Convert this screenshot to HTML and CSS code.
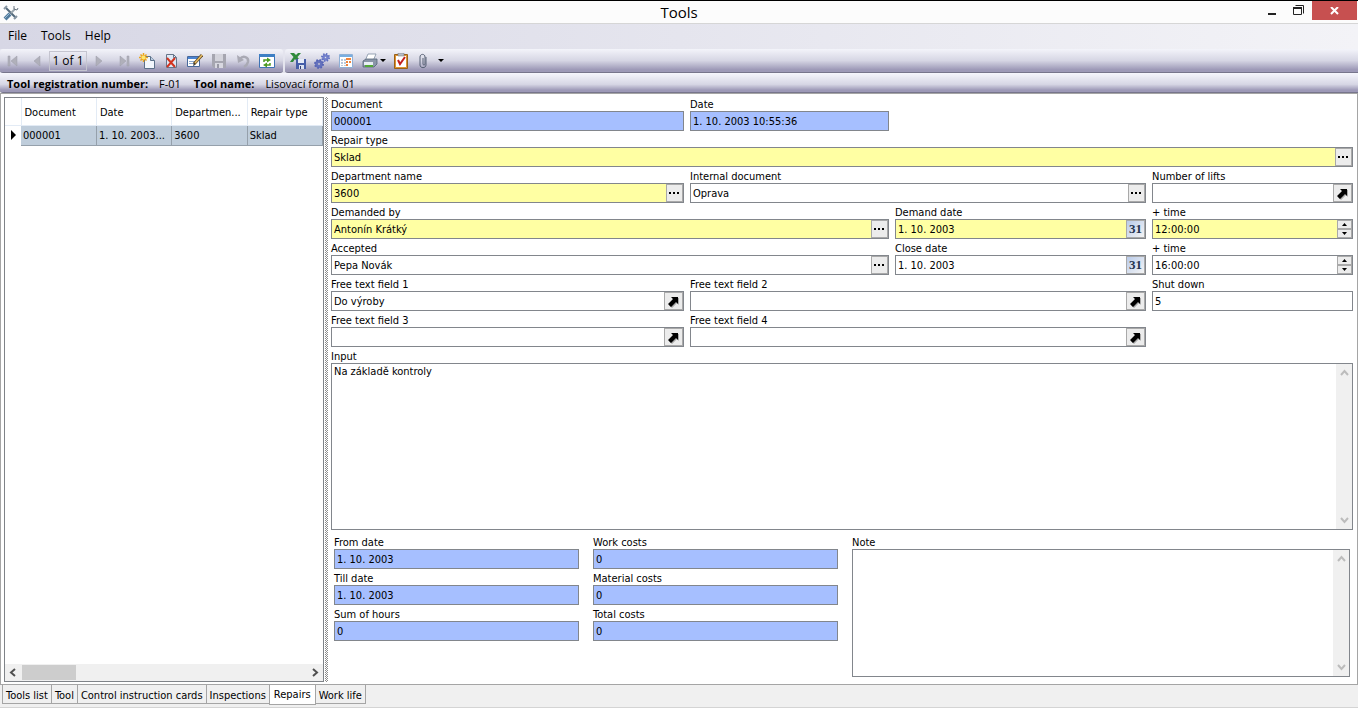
FILE: index.html
```html
<!DOCTYPE html>
<html lang="en">
<head>
  <meta charset="UTF-8">
  <meta name="viewport" content="width=device-width, initial-scale=1.0">
  <title>Tools</title>
  <link rel="stylesheet" href="styles.css">
</head>
<body>
  <svg class="defs" width="0" height="0" aria-hidden="true">
    <symbol id="dots" viewBox="0 0 11 11"><path d="M0 4h2v2H0zM4 4h2v2H4zM8 4h2v2H8z"/></symbol>
    <symbol id="goto" viewBox="0 0 13 13"><path d="M5 3h7v7l-2-2-5 5-3-3 5-5z" fill="#aaa"/><path d="M4 2h7v7L9 7l-5 5-3-3 5-5z"/></symbol>
    <symbol id="up" viewBox="0 0 9 9"><path d="M1 7 4.500 3 8 7" fill="none" stroke="currentColor" stroke-width="2"/></symbol>
    <symbol id="down" viewBox="0 0 9 9"><path d="M1 2 4.500 6 8 2" fill="none" stroke="currentColor" stroke-width="2"/></symbol>
  </svg>

  <header class="titlebar">
    <svg class="app-icon" width="16" height="16" viewBox="0 0 16 16">
      <path d="M3 3l10 10" stroke="#52687a" stroke-width="2"/>
      <path d="M1 4l3-3M11 14l3-3" stroke="#8796a3" stroke-width="2"/>
      <path d="M12 4L8 8" stroke="#9aa5ae" stroke-width="2"/>
      <path d="M7 9l-5 5" stroke="#527c9e" stroke-width="4"/>
      <path d="M6 9l-4 4" stroke="#9dbdd4"/>
      <path d="M11 1v3l3 1 1-2" fill="none" stroke="#66737e"/>
    </svg>
    <h1>Tools</h1>
    <div class="window-buttons">
      <button aria-label="Minimize"><svg width="12" height="12"><path d="M2 8h8v2H2z" fill="#222"/></svg></button>
      <button aria-label="Restore"><svg width="12" height="12"><path d="M2.500 .5h8v8" fill="none" stroke="#222"/><path d="M.5 2.500h8v7h-8z" fill="#fcfcfc" stroke="#222"/><path d="M0 2h9v2H0z" fill="#222"/></svg></button>
      <button class="close" aria-label="Close"><svg width="10" height="8"><path d="M1 0l7 7M8 0L1 7" stroke="#fff" stroke-width="2"/></svg></button>
    </div>
  </header>

  <nav class="menubar">
    <a href="#file">File</a>
    <a href="#tools">Tools</a>
    <a href="#help">Help</a>
  </nav>

  <div class="toolbar">
    <div class="tool-group">
      <button aria-label="First"><svg width="16" height="16"><path d="M3 3h2v10H3zM12 3v10L6 8z" fill="#b0b0ba" stroke="#9c9ca8" stroke-width=".5"/></svg></button>
      <button aria-label="Previous"><svg width="16" height="16"><path d="M11 3v10L5 8z" fill="#b0b0ba" stroke="#9c9ca8" stroke-width=".5"/></svg></button>
      <input class="position" type="text" value="1 of 1" aria-label="Position">
      <button aria-label="Next"><svg width="16" height="16"><path d="M5 3v10l6-5z" fill="#b0b0ba" stroke="#9c9ca8" stroke-width=".5"/></svg></button>
      <button aria-label="Last"><svg width="16" height="16"><path d="M12 3h2v10h-2zM5 3v10l6-5z" fill="#b0b0ba" stroke="#9c9ca8" stroke-width=".5"/></svg></button>
      <button aria-label="New"><svg width="16" height="16"><path d="M5.500 3.500h6l4 4v8h-10z" fill="#f2f6fc" stroke="#5b7089"/><path d="M11.500 3.500v4h4" fill="#bccce0" stroke="#5b7089"/><path d="M4.500 0v9M0 4.500h9M1.500 1.500l6 6M7.500 1.500l-6 6" stroke="#eba41c" stroke-width="1.500"/><circle cx="4.500" cy="4.500" r="2" fill="#ffe66d"/></svg></button>
      <button aria-label="Delete"><svg width="16" height="16"><path d="M3.500 1.500h7l3 3v10h-10z" fill="#dfe8f5" stroke="#66758a"/><path d="M10.500 1.500v3h3" fill="none" stroke="#66758a"/><path d="M4 5l8 9M12 5l-8 9" stroke="#d3331f" stroke-width="2"/></svg></button>
      <button aria-label="Edit"><svg width="16" height="16"><path d="M.5 3.500h12v10H.5z" fill="#fff" stroke="#47689b"/><path d="M1 4h11v2H1z" fill="#4a83d2"/><path d="M2 8.500h6M2 10.500h5" stroke="#8aa8cf"/><path d="M15 2l-8 9" stroke="#614b27" stroke-width="3"/><path d="M15 2l-7 8" stroke="#e9bd62" stroke-width="1.500"/><path d="M7 10l-1 3 2-1z" fill="#222"/></svg></button>
      <button aria-label="Save"><svg width="16" height="16"><path d="M1 1h14v14H3l-2-2z" fill="#a6a6b0"/><path d="M4 1h8v7H4z" fill="#d4d4dc"/><path d="M4 10h8v5H4z" fill="#d8d8e0"/><path d="M6 11h2v4H6z" fill="#9898a4"/></svg></button>
      <button aria-label="Undo"><svg width="16" height="16"><path d="M5 6c3-4 9-2 8 3-.5 2-2 4-4 5" fill="none" stroke="#a9a9b4" stroke-width="2.500"/><path d="M2 2l1 8 6-3z" fill="#a9a9b4"/></svg></button>
      <button aria-label="Refresh"><svg width="16" height="16"><path d="M.5 1.500h15v13H.5z" fill="#fff" stroke="#3e73b4"/><path d="M0 1h16v3H0z" fill="#3d7fc4"/><path d="M5 9V7h4M11 10v2H7" fill="none" stroke="#4d9a20" stroke-width="1.500"/><path d="M8 4.500l4 2.500-4 2.500zM8 9.500l-4 2.500 4 2.500z" fill="#4d9a20"/></svg></button>
    </div>
    <div class="tool-group wide">
      <button aria-label="Export to Excel"><svg width="16" height="16"><path d="M0 0h4l2 2 2-2h3L7.500 4 11 9H7L5 6 3 9H0l3.500-5z" fill="#2f8a3b"/><path d="M6 6h10v10H6z" fill="#465ea8"/><path d="M8 6h6v4H8z" fill="#e6ecf8"/><path d="M9 12h5v4H9z" fill="#dbe2f1"/><path d="M10 13h1v3h-1z" fill="#333f70"/></svg></button>
      <button aria-label="Settings"><svg width="16" height="16"><circle cx="5" cy="11" r="2.500" fill="none" stroke="#6572bd" stroke-width="3"/><circle cx="5" cy="11" r="4" fill="none" stroke="#5563b5" stroke-width="2" stroke-dasharray="1.600 1.541"/><circle cx="11.500" cy="4.500" r="2" fill="none" stroke="#7482cc" stroke-width="2.500"/><circle cx="11.500" cy="4.500" r="3.500" fill="none" stroke="#5f6ec0" stroke-width="2" stroke-dasharray="1.400 1.349"/></svg></button>
      <button aria-label="Calendar"><svg width="16" height="16"><path d="M1.500 1.500h13v13h-13z" fill="#fff" stroke="#8fb0d6"/><path d="M2 2h12v2H2z" fill="#79aee0"/><path d="M3 6h2v2H3zM6 6h2v2H6zM3 9h2v2H3zM6 9h2v2H6zM3 12h2v1H3zM6 12h2v1H6z" fill="#b9c9dd"/><path d="M8 5h5v2H8zM8 8h2v2H8zM11 8h2v2h-2zM8 11h2v2H8z" fill="#f0833a"/></svg></button>
      <button class="with-menu" aria-label="Print"><svg width="16" height="16"><path d="M6 1h8l-3 7H3z" fill="#fff" stroke="#8090a3" stroke-width=".8"/><path d="M1 8l3-2h11v5l-3 3H1z" fill="#8a96a8" stroke="#566478" stroke-width=".8"/><path d="M2 9h9v3H2z" fill="#e8eef4"/><path d="M3 12h8v2H3z" fill="#52a838"/></svg><svg width="6" height="4"><path d="M0 0h6L3 3z"/></svg></button>
      <button aria-label="Tasks"><svg width="16" height="16"><path d="M1.500 1.500h13v14h-13z" fill="#e09430" stroke="#996018"/><path d="M3 3h10v11H3z" fill="#fff"/><path d="M5 0h6v3H5z" fill="#b8bcc6" stroke="#777" stroke-width=".5"/><path d="M5 7l2 4 5-7" fill="none" stroke="#c31e1e" stroke-width="2"/></svg></button>
      <button class="with-menu attach" aria-label="Attachments"><svg width="10" height="16"><path d="M8 4v8c0 3.500-6 3.500-6 0V4c0-3.500 5-3.500 5 0v7c0 1.500-2 1.500-2 0V5" fill="none" stroke="#566074"/></svg><svg width="6" height="4"><path d="M0 0h6L3 3z"/></svg></button>
    </div>
  </div>

  <div class="infobar">
    <b>Tool registration number:</b><span>F-01</span>
    <b>Tool name:</b><span>Lisovací forma 01</span>
  </div>

  <main>
    <section class="list">
      <table>
        <thead>
          <tr><th class="marker"></th><th>Document</th><th>Date</th><th>Departmen...</th><th>Repair type</th></tr>
        </thead>
        <tbody>
          <tr><td class="marker"><svg width="5" height="10"><path d="M0 0v10l5-5z"/></svg></td><td>000001</td><td>1. 10. 2003...</td><td>3600</td><td>Sklad</td></tr>
        </tbody>
      </table>
      <div class="hscroll">
        <svg width="9" height="9"><path d="M7 1 3 4.500 7 8" fill="none" stroke="#505050" stroke-width="2"/></svg>
        <div class="track"><div class="thumb"></div></div>
        <svg width="9" height="9"><path d="M2 1l4 3.500L2 8" fill="none" stroke="#505050" stroke-width="2"/></svg>
      </div>
    </section>
    <div class="splitter"></div>

    <form class="detail">
      <div class="fields">
        <div class="field">
          <label for="document">Document</label>
          <div class="box locked"><input type="text" id="document" value="000001" readonly></div>
        </div>
        <div class="field">
          <label for="date">Date</label>
          <div class="box locked"><input type="text" id="date" value="1. 10. 2003 10:55:36" readonly></div>
        </div>
        <div class="field span4">
          <label for="repair-type">Repair type</label>
          <div class="box required"><input type="text" id="repair-type" value="Sklad"><button type="button" aria-label="Choose"><svg width="11" height="11"><use href="#dots"/></svg></button></div>
        </div>
        <div class="field">
          <label for="department">Department name</label>
          <div class="box required"><input type="text" id="department" value="3600"><button type="button" aria-label="Choose"><svg width="11" height="11"><use href="#dots"/></svg></button></div>
        </div>
        <div class="field span2">
          <label for="internal">Internal document</label>
          <div class="box"><input type="text" id="internal" value="Oprava"><button type="button" aria-label="Choose"><svg width="11" height="11"><use href="#dots"/></svg></button></div>
        </div>
        <div class="field">
          <label for="lifts">Number of lifts</label>
          <div class="box"><input type="text" id="lifts"><button type="button" class="large" aria-label="Open"><svg width="13" height="13"><use href="#goto"/></svg></button></div>
        </div>
        <div class="field span2">
          <label for="demanded">Demanded by</label>
          <div class="box required"><input type="text" id="demanded" value="Antonín Krátký"><button type="button" aria-label="Choose"><svg width="11" height="11"><use href="#dots"/></svg></button></div>
        </div>
        <div class="field">
          <label for="demand-date">Demand date</label>
          <div class="box required"><input type="text" id="demand-date" value="1. 10. 2003"><button type="button" class="large calendar">31</button></div>
        </div>
        <div class="field">
          <label for="demand-time">+ time</label>
          <div class="box required"><input type="text" id="demand-time" value="12:00:00"><div class="spin"><button type="button" aria-label="Up"><svg width="5" height="3"><path d="M0 3h5L2.500 0z"/></svg></button><button type="button" aria-label="Down"><svg width="5" height="3"><path d="M0 0h5L2.500 3z"/></svg></button></div></div>
        </div>
        <div class="field span2">
          <label for="accepted">Accepted</label>
          <div class="box"><input type="text" id="accepted" value="Pepa Novák"><button type="button" aria-label="Choose"><svg width="11" height="11"><use href="#dots"/></svg></button></div>
        </div>
        <div class="field">
          <label for="close-date">Close date</label>
          <div class="box"><input type="text" id="close-date" value="1. 10. 2003"><button type="button" class="large calendar">31</button></div>
        </div>
        <div class="field">
          <label for="close-time">+ time</label>
          <div class="box"><input type="text" id="close-time" value="16:00:00"><div class="spin"><button type="button" aria-label="Up"><svg width="5" height="3"><path d="M0 3h5L2.500 0z"/></svg></button><button type="button" aria-label="Down"><svg width="5" height="3"><path d="M0 0h5L2.500 3z"/></svg></button></div></div>
        </div>
        <div class="field">
          <label for="free1">Free text field 1</label>
          <div class="box"><input type="text" id="free1" value="Do výroby"><button type="button" class="large" aria-label="Open"><svg width="13" height="13"><use href="#goto"/></svg></button></div>
        </div>
        <div class="field span2">
          <label for="free2">Free text field 2</label>
          <div class="box"><input type="text" id="free2"><button type="button" class="large" aria-label="Open"><svg width="13" height="13"><use href="#goto"/></svg></button></div>
        </div>
        <div class="field">
          <label for="shutdown">Shut down</label>
          <div class="box"><input type="text" id="shutdown" value="5"></div>
        </div>
        <div class="field">
          <label for="free3">Free text field 3</label>
          <div class="box"><input type="text" id="free3"><button type="button" class="large" aria-label="Open"><svg width="13" height="13"><use href="#goto"/></svg></button></div>
        </div>
        <div class="field span2">
          <label for="free4">Free text field 4</label>
          <div class="box"><input type="text" id="free4"><button type="button" class="large" aria-label="Open"><svg width="13" height="13"><use href="#goto"/></svg></button></div>
        </div>
      </div>

      <div class="field grow">
        <label for="input">Input</label>
        <div class="box memo">
          <textarea id="input">Na základě kontroly</textarea>
          <div class="vscroll"><svg width="9" height="9"><use href="#up"/></svg><svg width="9" height="9"><use href="#down"/></svg></div>
        </div>
      </div>

      <div class="summary">
        <div class="totals">
          <div class="field">
            <label for="from">From date</label>
            <div class="box locked"><input type="text" id="from" value="1. 10. 2003" readonly></div>
          </div>
          <div class="field">
            <label for="till">Till date</label>
            <div class="box locked"><input type="text" id="till" value="1. 10. 2003" readonly></div>
          </div>
          <div class="field">
            <label for="hours">Sum of hours</label>
            <div class="box locked"><input type="text" id="hours" value="0" readonly></div>
          </div>
        </div>
        <div class="totals">
          <div class="field">
            <label for="work">Work costs</label>
            <div class="box locked"><input type="text" id="work" value="0" readonly></div>
          </div>
          <div class="field">
            <label for="material">Material costs</label>
            <div class="box locked"><input type="text" id="material" value="0" readonly></div>
          </div>
          <div class="field">
            <label for="total">Total costs</label>
            <div class="box locked"><input type="text" id="total" value="0" readonly></div>
          </div>
        </div>
        <div class="field">
          <label for="note">Note</label>
          <div class="box memo">
            <textarea id="note"></textarea>
            <div class="vscroll"><svg width="9" height="9"><use href="#up"/></svg><svg width="9" height="9"><use href="#down"/></svg></div>
          </div>
        </div>
      </div>
    </form>
  </main>

  <nav class="tabs">
    <a href="#list">Tools list</a>
    <a href="#tool">Tool</a>
    <a href="#cards">Control instruction cards</a>
    <a href="#inspections">Inspections</a>
    <a href="#repairs" class="active">Repairs</a>
    <a href="#worklife">Work life</a>
  </nav>
</body>
</html>
```

FILE: styles.css
```css
* {
  box-sizing: border-box;
}
body {
  margin: 0;
  min-height: 100vh;
  display: flex;
  flex-direction: column;
  background: #f0f0f0;
  color: #000;
  font-family: Tahoma, "DejaVu Sans Condensed", "Noto Sans", sans-serif;
  font-size: 11px;
}
button, input, textarea {
  font: inherit;
  color: inherit;
  margin: 0;
  padding: 0;
  border: none;
  border-radius: 0;
  background: none;
}
a {
  color: inherit;
  text-decoration: none;
}
svg {
  display: block;
  flex: none;
}
.defs {
  position: absolute;
}

/* window title */
.titlebar {
  display: grid;
  grid-template-columns: 1fr auto 1fr;
  height: 24px;
  border-top: 1px solid #000;
  border-bottom: 1px solid #d6d6d6;
  background: #fcfcfc;
}
.app-icon {
  margin: 4px 3px;
}
.titlebar h1 {
  margin: 0;
  font: 15px/22px "Open Sans", sans-serif;
}
.window-buttons {
  display: flex;
  justify-content: flex-end;
  padding-right: 1px;
}
.window-buttons button {
  width: 27px;
  height: 19px;
  display: flex;
  align-items: center;
  justify-content: center;
}
.window-buttons .close {
  width: 45px;
  background: #c75050;
}

/* menu and toolbars */
.menubar {
  display: flex;
  gap: 14px;
  height: 25px;
  padding-left: 8px;
  background: linear-gradient(90deg, #d7d7e5, #f3f3f7);
  font: 12px/24px "Open Sans", sans-serif;
}
.toolbar {
  display: flex;
  gap: 2px;
  height: 24px;
  background: #e4e4ee;
}
.tool-group {
  display: flex;
  align-items: center;
  padding: 0 4px 0 1px;
  border-bottom: 1px solid #77758c;
  border-radius: 3px;
  background: linear-gradient(#f3f4fa, #d6d6e4 50%, #9d99b7 90%);
}
.tool-group.wide {
  flex: 1;
  border-radius: 3px 0 0 3px;
}
.tool-group button {
  width: 24px;
  height: 22px;
  display: flex;
  align-items: center;
  justify-content: center;
}
.tool-group .with-menu {
  width: 31px;
  gap: 2px;
}
.tool-group .attach {
  width: 36px;
  gap: 10px;
}
.position {
  width: 38px;
  height: 20px;
  border: 1px solid #c4c4cf;
  text-align: center;
  font: 12px "Open Sans", sans-serif;
}
.infobar {
  display: flex;
  gap: 11px;
  height: 20px;
  padding-left: 7px;
  border-bottom: 1px solid #77758c;
  border-radius: 0 0 0 3px;
  background: linear-gradient(#f6f6fd, #d6d6e4 60%, #9d99b7 90%);
  font: 11px/21px "Open Sans", sans-serif;
}
.infobar span {
  padding-right: 2px;
}

main {
  flex: 1;
  display: flex;
  padding: 3px 4px 2px 3px;
  border: 1px solid #a5a5a5;
  background: #fff;
}

/* list of repairs */
.list {
  width: 320px;
  flex: none;
  display: flex;
  flex-direction: column;
  justify-content: space-between;
  border: 1px solid #7f8388;
}
table {
  width: 100%;
  table-layout: fixed;
  border-collapse: collapse;
}
th, td {
  white-space: nowrap;
  text-align: left;
  font-weight: normal;
}
th {
  height: 27px;
  padding: 2px 3px 0;
  border: solid #e3ebf5;
  border-width: 0 1px 1px 0;
}
td {
  height: 20px;
  padding: 0 2px;
  border: solid #95a0ab;
  border-width: 0 1px 1px 0;
  background: #bfcddb;
}
.marker {
  width: 16px;
}
td.marker {
  padding-left: 6px;
  border: none;
  background: #fff;
}
.hscroll {
  display: flex;
  align-items: center;
  height: 17px;
  padding: 0 3px;
  gap: 5px;
  background: #f0f0f0;
}
.track {
  flex: 1;
}
.thumb {
  width: 54px;
  height: 15px;
  background: #cdcdcd;
}
.splitter {
  width: 3px;
  margin: 0 3px 0 1px;
  background: repeating-conic-gradient(#8c8c8c 0 25%, #fff 0 50%) 0 0 / 2px 2px;
}

/* repair detail */
.detail {
  flex: 1;
  min-width: 0;
  display: flex;
  flex-direction: column;
  gap: 2px;
}
.fields {
  display: grid;
  grid-template-columns: 353fr 199fr 251fr 201fr;
  gap: 2px 6px;
}
.span2 {
  grid-column: span 2;
}
.span4 {
  grid-column: span 4;
}
.field {
  min-width: 0;
  display: flex;
  flex-direction: column;
}
.field label {
  height: 14px;
  line-height: 16px;
}
.grow, .memo {
  flex: 1;
}
.box {
  display: flex;
  min-height: 20px;
  border: 1px solid #82868c;
  background: #fff;
}
.box input {
  flex: 1;
  min-width: 0;
  height: 18px;
  padding: 0 2px;
}
.required {
  background: #ffffa3;
}
.locked {
  background: #a6bfff;
}
.box button {
  width: 17px;
  display: flex;
  align-items: center;
  justify-content: center;
  border: 1px solid #a9a9a9;
  background: #ececec;
}
.box button.large {
  width: 19px;
}
.box .calendar {
  background: linear-gradient(135deg, #b9cbea, #f4f4f4);
  color: #26344f;
  font: bold 13px "Liberation Serif", serif;
}
.spin {
  width: 15px;
  display: flex;
  flex-direction: column;
}
.box .spin button {
  width: 15px;
  height: 9px;
}
.memo textarea {
  flex: 1;
  padding: 1px 2px;
  line-height: 13px;
  resize: none;
}
.vscroll {
  width: 16px;
  display: flex;
  flex-direction: column;
  align-items: center;
  justify-content: space-between;
  padding: 4px 0;
  background: #f0f0f0;
  color: #bcbcbc;
}
.summary {
  display: grid;
  grid-template-columns: 245fr 245fr 498fr;
  gap: 14px;
  height: 150px;
  padding: 3px 3px 5px;
}
.totals {
  display: flex;
  flex-direction: column;
  gap: 2px;
}

/* page tabs */
.tabs {
  display: flex;
  height: 23px;
  padding-left: 2px;
  border-bottom: 1px solid #d4d4d4;
}
.tabs a {
  height: 19px;
  padding: 0 3px;
  border: solid #a5a5a5;
  border-width: 0 1px 1px;
  margin-right: -1px;
  line-height: 22px;
}
.tabs .active {
  height: 20px;
  padding: 0 4px;
  background: #fff;
  line-height: 20px;
}
```
